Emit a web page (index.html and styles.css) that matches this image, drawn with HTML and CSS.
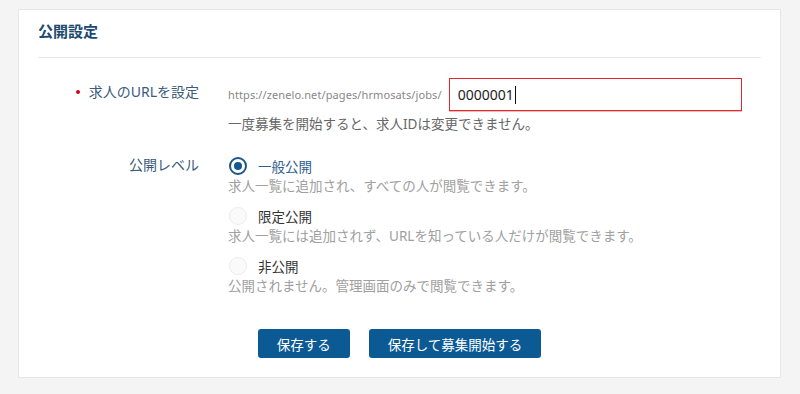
FILE: index.html
```html
<!DOCTYPE html>
<html lang="ja">
<head>
  <meta charset="UTF-8" />
  <meta name="viewport" content="width=device-width, initial-scale=1.0"/>
  <title>公開設定</title>
  <link rel="stylesheet" href="styles.css">
</head>
<body>

  <div class="card">
    <h2 class="card-title">公開設定</h2>

    <div class="form">
      <div class="form-row">
        <div class="form-label url-label"><span class="required"></span>求人のURLを設定</div>
        <div class="form-field">
          <div class="url-line">
            <span class="url-prefix">https://zenelo.net/pages/hrmosats/jobs/</span>
            <div class="text-field">0000001<span class="caret"></span></div>
          </div>
          <p class="note">一度募集を開始すると、求人IDは変更できません。</p>
        </div>
      </div>

      <div class="form-row">
        <div class="form-label">公開レベル</div>
        <div class="form-field">
          <div class="option">
            <label class="radio-line checked"><span class="radio"></span>一般公開</label>
            <p class="hint">求人一覧に追加され、すべての人が閲覧できます。</p>
          </div>
          <div class="option">
            <label class="radio-line"><span class="radio"></span>限定公開</label>
            <p class="hint">求人一覧には追加されず、URLを知っている人だけが閲覧できます。</p>
          </div>
          <div class="option">
            <label class="radio-line"><span class="radio"></span>非公開</label>
            <p class="hint">公開されません。管理画面のみで閲覧できます。</p>
          </div>
        </div>
      </div>
    </div>

    <div class="actions">
      <button class="btn">保存する</button>
      <button class="btn">保存して募集開始する</button>
    </div>
  </div>

</body>
</html>
```

FILE: styles.css
```css
body {
  margin: 0;
  padding: 9px 19px 0 18px;
  background: #f4f4f4;
  font-family: "Noto Sans", "Noto Sans CJK JP", sans-serif;
  color: #333;
}
.card {
  background: #fff;
  border: 1px solid #e6e6e6;
  padding: 0 19px 19px;
}
.card-title {
  margin: 0;
  padding: 10px 0 15px;
  font-size: 15px;
  line-height: 22px;
  font-weight: bold;
  color: #1d4a70;
  border-bottom: 1px solid #e8e8e8;
}

.form { padding-top: 20px; }
.form-row {
  display: grid;
  grid-template-columns: 161px 1fr;
  column-gap: 29px;
  margin-bottom: 21px;
}
.form-row:last-child { margin-bottom: 0; }
.form-label {
  text-align: right;
  font-size: 14px;
  line-height: 20px;
  color: #3a5b7c;
}
.url-label { padding-top: 4px; }
.required {
  display: inline-block;
  width: 4px;
  height: 4px;
  border-radius: 50%;
  background: #d0021b;
  margin: 0 9px 3px 0;
  vertical-align: middle;
}

.url-line { display: flex; align-items: center; gap: 7px; }
.url-prefix { font-size: 11px; color: #888; letter-spacing: 0.1px; }
.text-field {
  width: 293px;
  height: 33px;
  box-sizing: border-box;
  border: 1px solid #e0282e;
  box-shadow: 0 1px 0 #f4b6b6;
  padding: 0 8px;
  display: flex;
  align-items: center;
  font-size: 14px;
  color: #222;
}
.caret {
  display: inline-block;
  width: 1px;
  height: 18px;
  background: #111;
  margin-left: 1px;
}
.note {
  margin: 3px 0 0;
  font-size: 13.5px;
  line-height: 20px;
  color: #666;
}

.option { margin-bottom: 10px; }
.option:last-child { margin-bottom: 0; }
.radio-line {
  display: flex;
  align-items: center;
  gap: 11px;
  height: 22px;
  font-size: 13.5px;
  color: #333;
}
.radio {
  width: 18px;
  height: 18px;
  box-sizing: border-box;
  border-radius: 50%;
  border: 1px solid #ececec;
  background: #fafafa;
  margin-left: 1px;
}
.checked { color: #2f5e8c; }
.checked .radio {
  border: 2px solid #1d5585;
  background: #fff;
  position: relative;
}
.checked .radio::after {
  content: "";
  position: absolute;
  left: 3px;
  top: 3px;
  width: 8px;
  height: 8px;
  border-radius: 50%;
  background: #0e5894;
}
.hint {
  margin: 0;
  font-size: 13.5px;
  line-height: 18px;
  color: #a0a0a0;
}

.actions {
  display: flex;
  justify-content: center;
  gap: 19px;
  margin-top: 34px;
}
.btn {
  height: 29px;
  padding: 0 19px;
  border: none;
  border-radius: 3px;
  background: #0b5a94;
  color: #fff;
  font-family: inherit;
  font-size: 13.5px;
}
```
